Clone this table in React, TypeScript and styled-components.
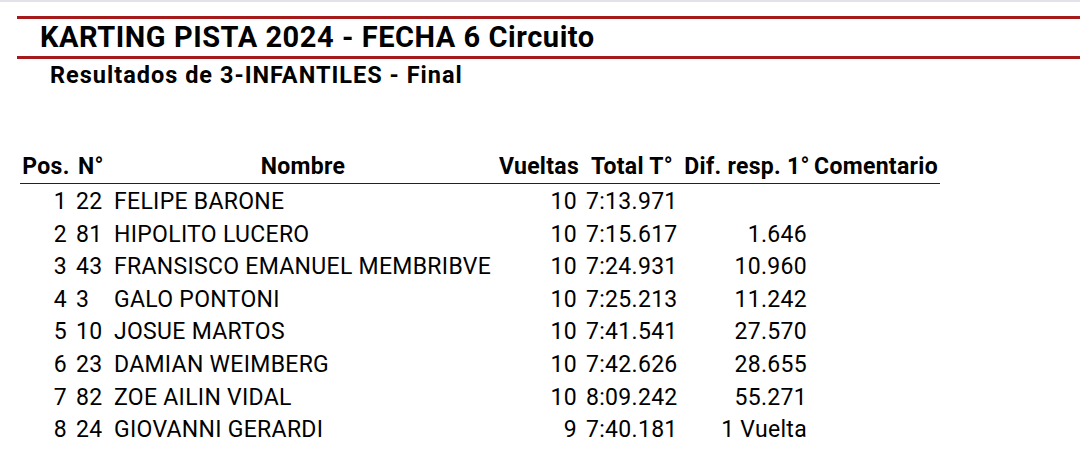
import React from "react";
import styled, { createGlobalStyle } from "styled-components";

const Global = createGlobalStyle`
  html, body { margin: 0; padding: 0; background: #ffffff; }
  body { font-family: Roboto, "Liberation Sans", Arial, sans-serif; color: #000; width: 1080px; height: 475px; overflow: hidden; }
`;

const Page = styled.div`
  display: flex;
  flex-direction: column;
  width: 1080px;
`;

const TopBand = styled.div`
  height: 2px;
  background: #e2e2ea;
`;

const TitleBar = styled.h1`
  margin: 14px 0 0 17px;
  border-top: 3px solid #a51a1a;
  border-bottom: 3px solid #a51a1a;
  padding: 0 0 0 23px;
  height: 37px;
  font-size: 29px;
  line-height: 37px;
  letter-spacing: 0.55px;
  font-weight: 700;
`;

const Subtitle = styled.h2`
  margin: 3px 0 0 50px;
  font-size: 23.5px;
  line-height: 27px;
  letter-spacing: 1px;
  font-weight: 700;
`;

const Table = styled.div`
  margin: 61px 0 0 20px;
  display: grid;
  grid-template-columns: 52px 38px 386px 86px 100px 130px 128px;
  width: 920px;
`;

const HeadCell = styled.div`
  font-size: 23px;
  font-weight: 700;
  letter-spacing: 0.3px;
  line-height: 33px;
  border-bottom: 1px solid #222;
  text-align: center;
  white-space: nowrap;
  margin-bottom: 2px;
`;

const Cell = styled.div<{ $align: "left" | "right" }>`
  font-size: 23px;
  letter-spacing: 0.3px;
  line-height: 32.6px;
  text-align: ${(p) => p.$align};
  padding: ${(p) => (p.$align === "left" ? "0 0 0 4px" : "0 5px 0 0")};
  white-space: nowrap;
`;

const rows = [
  ["1", "22", "FELIPE BARONE", "10", "7:13.971", "", ""],
  ["2", "81", "HIPOLITO LUCERO", "10", "7:15.617", "1.646", ""],
  ["3", "43", "FRANSISCO EMANUEL MEMBRIBVE", "10", "7:24.931", "10.960", ""],
  ["4", "3", "GALO PONTONI", "10", "7:25.213", "11.242", ""],
  ["5", "10", "JOSUE MARTOS", "10", "7:41.541", "27.570", ""],
  ["6", "23", "DAMIAN WEIMBERG", "10", "7:42.626", "28.655", ""],
  ["7", "82", "ZOE AILIN VIDAL", "10", "8:09.242", "55.271", ""],
  ["8", "24", "GIOVANNI GERARDI", "9", "7:40.181", "1 Vuelta", ""],
];

const headers = ["Pos.", "N°", "Nombre", "Vueltas", "Total T°", "Dif. resp. 1°", "Comentario"];
const aligns: ("left" | "right")[] = ["right", "left", "left", "right", "left", "right", "left"];

export default function App() {
  return (
    <Page>
      <Global />
      <TopBand />
      <TitleBar>KARTING PISTA 2024 - FECHA 6 Circuito</TitleBar>
      <Subtitle>Resultados de 3-INFANTILES - Final</Subtitle>
      <Table>
        {headers.map((h) => (
          <HeadCell key={h}>{h}</HeadCell>
        ))}
        {rows.map((r, i) =>
          r.map((c, j) => (
            <Cell key={`${i}-${j}`} $align={aligns[j]}>
              {c}
            </Cell>
          ))
        )}
      </Table>
    </Page>
  );
}
